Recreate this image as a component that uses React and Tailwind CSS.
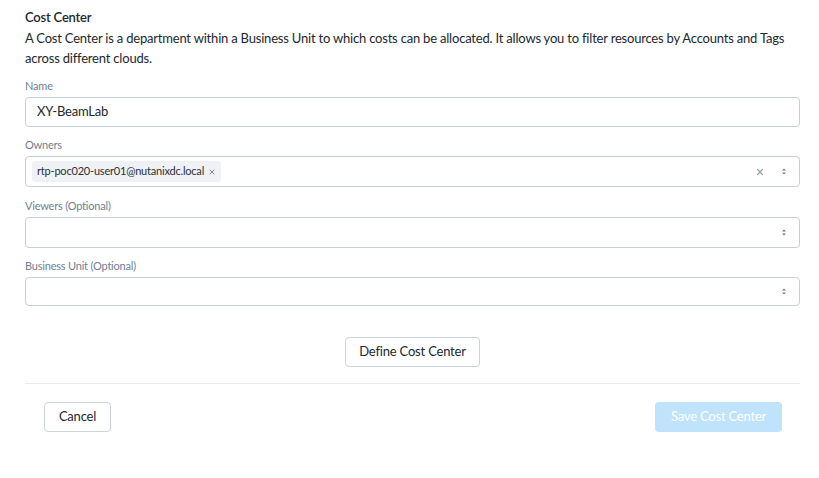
import { X } from 'lucide-react'

function Updown() {
  return (
    <svg width="6" height="9" viewBox="0 0 6 9" className="shrink-0">
      <path d="M1 3.5 L3 1.5 L5 3.5 Z" fill="#6b7785" />
      <path d="M1 5.5 L3 7.5 L5 5.5 Z" fill="#6b7785" />
    </svg>
  )
}

function Field({ label, children, className = '' }) {
  return (
    <div className={className}>
      <div className="text-[11px] leading-[16px] text-[#6e7f96] mb-[3px]">{label}</div>
      {children}
    </div>
  )
}

export default function App() {
  return (
    <div className="w-[819px] h-[478px] bg-white pl-[25px] pr-[19px] pt-[7px] text-[#22272e] tracking-[-0.2px]" style={{ fontFamily: 'Lato, "Open Sans", sans-serif' }}>
      <h1 className="text-[13px] leading-[20px] font-semibold">Cost Center</h1>
      <p className="text-[13px] leading-[20px] mt-px">
        A Cost Center is a department within a Business Unit to which costs can be allocated. It allows you to filter resources by Accounts and Tags across different clouds.
      </p>

      <Field label="Name" className="mt-[10px]">
        <div className="h-[30px] border border-[#c7ced8] rounded-[4px] flex items-center px-[11px] text-[13px]">
          XY-BeamLab
        </div>
      </Field>

      <Field label="Owners" className="mt-[10px]">
        <div className="h-[31px] border border-[#c7ced8] rounded-[4px] flex items-center pl-[6px] pr-[12px]">
          <span className="h-[21px] bg-[#eff1f4] rounded-[3px] px-[5px] flex items-center gap-[4px] text-[11px] text-[#2b3038]">
            rtp-poc020-user01@nutanixdc.local
            <X size={8} strokeWidth={3} className="text-[#7c8796]" />
          </span>
          <div className="flex-1" />
          <X size={10} strokeWidth={3} className="text-[#9aa4b1] mr-[16px]" />
          <Updown />
        </div>
      </Field>

      <Field label="Viewers (Optional)" className="mt-[11px]">
        <div className="h-[31px] border border-[#c7ced8] rounded-[4px] flex items-center justify-end pr-[12px]">
          <Updown />
        </div>
      </Field>

      <Field label="Business Unit (Optional)" className="mt-[10px]">
        <div className="h-[29px] border border-[#c7ced8] rounded-[4px] flex items-center justify-end pr-[12px]">
          <Updown />
        </div>
      </Field>

      <div className="flex justify-center mt-[31px]">
        <button className="h-[30px] px-[13px] border border-[#ccd3dc] rounded-[4px] text-[13px] text-[#22272e] bg-white">
          Define Cost Center
        </button>
      </div>

      <div className="h-px bg-[#e8ebef] mt-[16px]" />

      <div className="flex justify-between items-center mt-[18px] pl-[19px] pr-[18px]">
        <button className="h-[30px] w-[67px] border border-[#ccd3dc] rounded-[4px] text-[13px] text-[#22272e] bg-white">
          Cancel
        </button>
        <button className="h-[30px] w-[127px] rounded-[4px] text-[13px] text-white bg-[#bee3fb]">
          Save Cost Center
        </button>
      </div>
    </div>
  )
}
